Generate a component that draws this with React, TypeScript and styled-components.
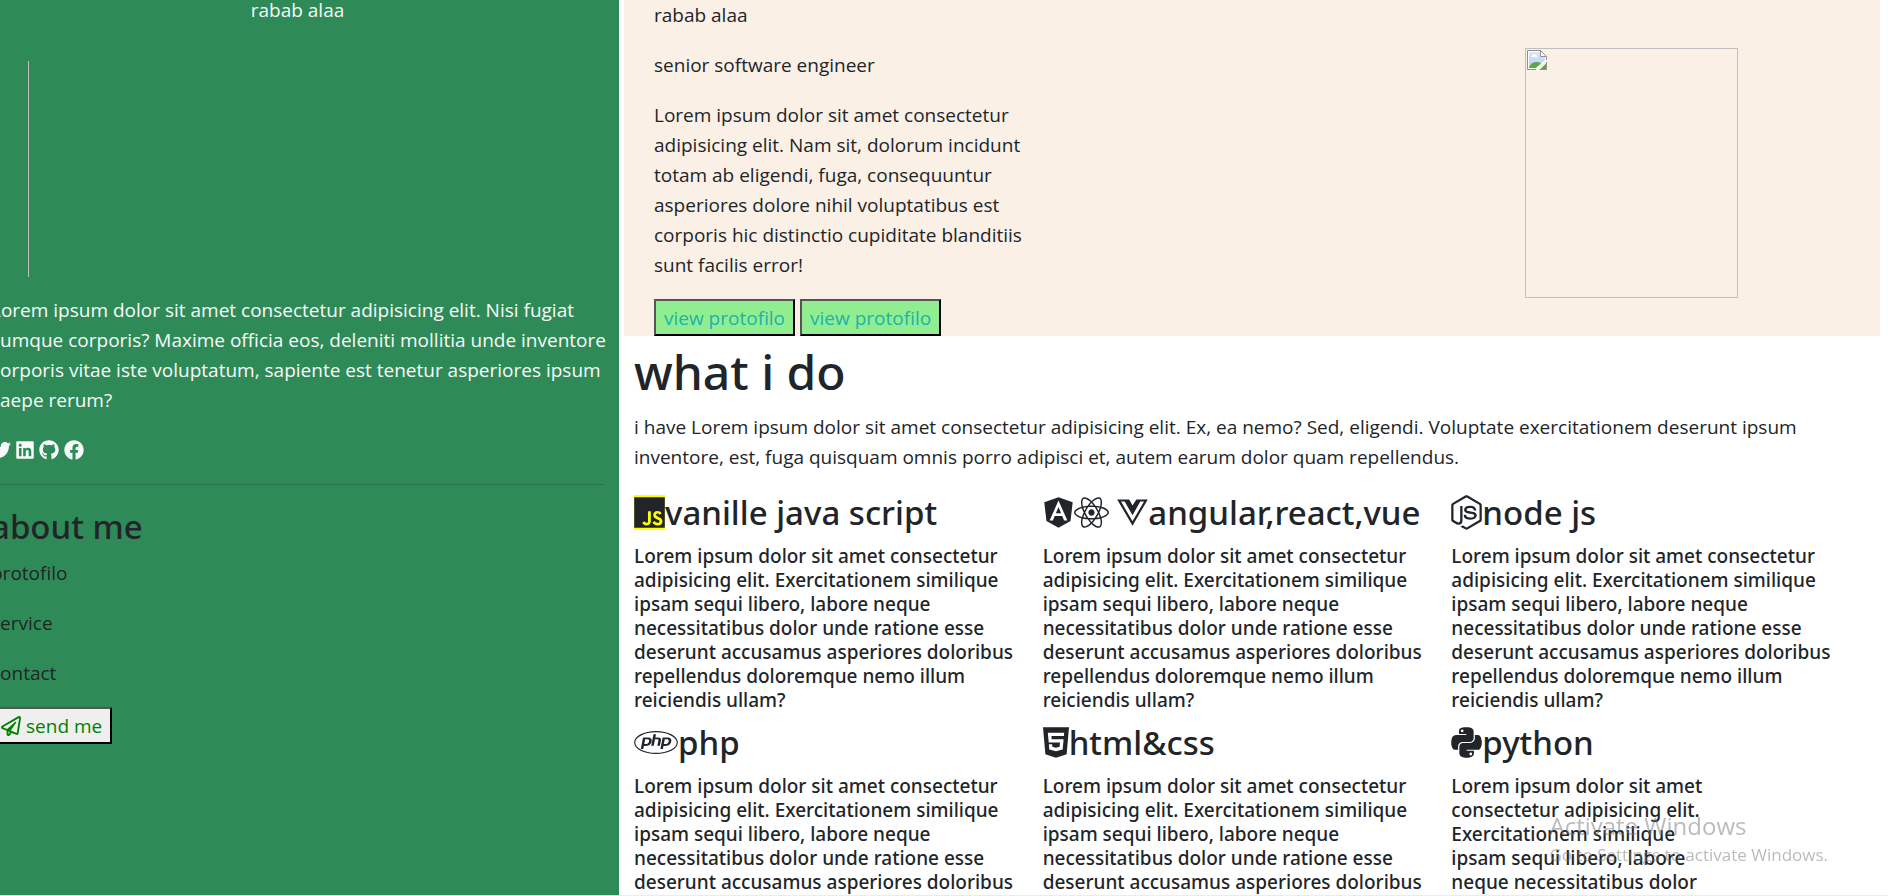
import React from 'react';
import styled, { createGlobalStyle } from 'styled-components';
import {
  FaAngular,
  FaFacebook,
  FaGithub,
  FaHtml5,
  FaJs,
  FaLinkedin,
  FaNodeJs,
  FaPhp,
  FaPython,
  FaReact,
  FaRegPaperPlane,
  FaTwitter,
  FaVuejs,
} from 'react-icons/fa';

const headingFont = '"Segoe UI", "Noto Sans", "Open Sans", sans-serif';

const GlobalStyle = createGlobalStyle`
  *, *::before, *::after { box-sizing: border-box; }
  body {
    margin: 0;
    background: #fff;
    color: #212529;
    font-family: "Segoe UI", "Open Sans", "Noto Sans", sans-serif;
    font-size: 19px;
    line-height: 30px;
  }
`;

const Page = styled.div`
  display: grid;
  grid-template-columns: 619fr 1256fr;
  column-gap: 5px;
  height: 100vh;
  padding-right: 8px;
  overflow: hidden;
  border-bottom: 1px solid #ececec;
`;

const Sidebar = styled.aside`
  background: #2e8b57;
  overflow: hidden;
  min-width: 0;
`;

const SidebarInner = styled.div`
  margin: -6px 15px 0 -9px;
`;

const Paragraph = styled.p`
  margin: 0 0 19px;
  padding-top: 1px;
`;

const LightText = styled(Paragraph)`
  color: #f8f9fa;
`;

const OwnerName = styled(LightText)`
  text-align: center;
`;

const Bio = styled(LightText)`
  margin-right: -8px;
`;

const PortraitEdge = styled.div`
  width: 1px;
  height: 216px;
  margin: 36px 0 17px 37px;
  background: #c0c0c0;
`;

const SocialLinks = styled.nav`
  display: flex;
  align-items: center;
  gap: 5px;
  height: 30px;
  padding-top: 2px;
`;

const SocialLink = styled.a<{ $width: number }>`
  display: flex;
  color: #f8f9fa;

  svg {
    height: 20px;
    width: ${({ $width }) => $width}px;
  }
`;

const Divider = styled.hr`
  height: 1px;
  margin: 20px 0;
  border: 0;
  background: #212529;
  opacity: 0.25;
`;

const Heading = styled.h2`
  margin: 0 0 9px;
  padding-top: 1px;
  font-family: ${headingFont};
  font-size: 33px;
  font-weight: 500;
  line-height: 42px;
  white-space: nowrap;
`;

const Glyph = styled.span<{ $width: number; $marked?: boolean }>`
  display: inline-block;
  height: 35px;
  background: ${({ $marked }) => ($marked ? '#ff0' : 'transparent')};
  vertical-align: -5px;

  svg {
    display: block;
    height: 35px;
    width: ${({ $width }) => $width}px;
  }
`;

const MenuItem = styled.a`
  display: block;
  width: fit-content;
  margin-bottom: 19px;
  padding-top: 1px;
  color: inherit;
  text-decoration: none;
`;

const Button = styled.button<{ $tone: 'plain' | 'lime' }>`
  height: 37px;
  padding: 0 8px;
  border: 2px solid;
  border-color: #555 #000 #000 #555;
  background: ${({ $tone }) => ($tone === 'lime' ? '#90ee90' : '#efefef')};
  color: ${({ $tone }) => ($tone === 'lime' ? '#20b2aa' : '#008000')};
  font: inherit;
  white-space: nowrap;

  svg {
    margin-right: 5px;
    font-size: 20px;
    vertical-align: -3px;
  }
`;

const Main = styled.main`
  overflow: hidden;
  min-width: 0;
`;

const Hero = styled.section`
  display: flex;
  justify-content: space-between;
  align-items: flex-start;
  padding: 0 142px 0 30px;
  background: #faf0e6;
`;

const HeroText = styled.div`
  width: 376px;
  margin-top: -1px;
`;

const ButtonRow = styled.div`
  display: flex;
  gap: 5px;
`;

const MissingPicture = styled.div`
  width: 213px;
  height: 250px;
  margin-top: 48px;
  padding: 1px;
  border: 1px solid #c0c0c0;

  svg {
    display: block;
  }
`;

const Services = styled.section`
  padding: 5px 20px 0 10px;
`;

const Title = styled.h1`
  margin: 0 0 9px;
  padding-top: 1px;
  font-family: ${headingFont};
  font-size: 48px;
  font-weight: 500;
  line-height: 60px;
`;

const CardGrid = styled.div`
  display: grid;
  grid-template-columns: repeat(3, minmax(0, 1fr));
`;

const Card = styled.article<{ $narrow?: boolean }>`
  padding-right: ${({ $narrow }) => ($narrow ? '136px' : '20px')};
`;

const CardText = styled.p`
  margin: 0 0 9px;
  padding-top: 1px;
  font-family: ${headingFont};
  font-weight: 500;
  line-height: 24px;
`;

const Watermark = styled.div`
  position: fixed;
  right: 60px;
  bottom: 27px;
  color: rgba(120, 120, 120, 0.5);
  pointer-events: none;
`;

const WatermarkTitle = styled.div`
  font-size: 24px;
`;

const WatermarkNote = styled.div`
  font-size: 17px;
  line-height: 28px;
`;

const BrokenImageIcon = () => (
  <svg width="20" height="20" viewBox="0 0 20 20" aria-hidden="true">
    <defs>
      <linearGradient id="sky" x1="0" y1="0" x2="0" y2="1">
        <stop offset="0" stopColor="#dbe6fb" />
        <stop offset="1" stopColor="#b4caf3" />
      </linearGradient>
    </defs>
    <path d="M.5.5h13l6 6v4L10.500 19.500H.5z" fill="#fff" />
    <path d="M2 2h11v4.500h5V10l-9 8H2z" fill="url(#sky)" />
    <path d="M4 7c0-1 1-1.500 1.500-1.500C6 3.500 8.500 3.500 9 5.500c1 0 1.500.5 1.500 1.500z" fill="#fff" />
    <path d="M2 18c1-4 4-6 7.500-6 2 0 3.500.5 4.500 1.500L8.500 18z" fill="#5bab3b" />
    <path d="M9 19.500H.5V.5h13l6 6V10M13.500.5v6h6" fill="none" stroke="#919191" />
    <path d="M19.500 13v6.500H13l3-3z" fill="#5bab3b" />
    <path d="M19.500 12v7.500H12.500" fill="none" stroke="#919191" />
  </svg>
);

const cardText =
  'Lorem ipsum dolor sit amet consectetur adipisicing elit. Exercitationem similique ipsam sequi libero, labore neque necessitatibus dolor unde ratione esse deserunt accusamus asperiores doloribus repellendus doloremque nemo illum reiciendis ullam?';

const skills: { name: string; icon: React.ReactNode; narrow?: boolean }[] = [
  { name: 'vanille java script', icon: <Glyph $width={31} $marked><FaJs /></Glyph> },
  {
    name: 'angular,react,vue',
    icon: (
      <>
        <Glyph $width={31}><FaAngular /></Glyph>
        <Glyph $width={35}><FaReact /></Glyph>{' '}
        <Glyph $width={31}><FaVuejs /></Glyph>
      </>
    ),
  },
  { name: 'node js', icon: <Glyph $width={31}><FaNodeJs /></Glyph> },
  { name: 'php', icon: <Glyph $width={44}><FaPhp /></Glyph> },
  { name: 'html&css', icon: <Glyph $width={26}><FaHtml5 /></Glyph> },
  { name: 'python', icon: <Glyph $width={31}><FaPython /></Glyph>, narrow: true },
];

export default function App() {
  return (
    <>
      <GlobalStyle />
      <Page>
        <Sidebar>
          <SidebarInner>
            <OwnerName>rabab alaa</OwnerName>
            <PortraitEdge />
            <Bio>
              Lorem ipsum dolor sit amet consectetur adipisicing elit. Nisi fugiat cumque corporis? Maxime officia
              eos, deleniti mollitia unde inventore corporis vitae iste voluptatum, sapiente est tenetur asperiores
              ipsum saepe rerum?
            </Bio>
            <SocialLinks>
              <SocialLink $width={20} href="#twitter" aria-label="Twitter"><FaTwitter /></SocialLink>
              <SocialLink $width={18} href="#linkedin" aria-label="LinkedIn"><FaLinkedin /></SocialLink>
              <SocialLink $width={20} href="#github" aria-label="GitHub"><FaGithub /></SocialLink>
              <SocialLink $width={20} href="#facebook" aria-label="Facebook"><FaFacebook /></SocialLink>
            </SocialLinks>
            <Divider />
            <Heading>about me</Heading>
            <MenuItem href="#protofilo">protofilo</MenuItem>
            <MenuItem href="#service">service</MenuItem>
            <MenuItem href="#contact">contact</MenuItem>
            <Button type="button" $tone="plain"><FaRegPaperPlane />send me</Button>
          </SidebarInner>
        </Sidebar>
        <Main>
          <Hero>
            <HeroText>
              <Paragraph>rabab alaa</Paragraph>
              <Paragraph>senior software engineer</Paragraph>
              <Paragraph>
                Lorem ipsum dolor sit amet consectetur adipisicing elit. Nam sit, dolorum incidunt totam ab eligendi,
                fuga, consequuntur asperiores dolore nihil voluptatibus est corporis hic distinctio cupiditate
                blanditiis sunt facilis error!
              </Paragraph>
              <ButtonRow>
                <Button type="button" $tone="lime">view protofilo</Button>
                <Button type="button" $tone="lime">view protofilo</Button>
              </ButtonRow>
            </HeroText>
            <MissingPicture><BrokenImageIcon /></MissingPicture>
          </Hero>
          <Services>
            <Title>what i do</Title>
            <Paragraph>
              i have Lorem ipsum dolor sit amet consectetur adipisicing elit. Ex, ea nemo? Sed, eligendi. Voluptate
              exercitationem deserunt ipsum inventore, est, fuga quisquam omnis porro adipisci et, autem earum dolor
              quam repellendus.
            </Paragraph>
            <CardGrid>
              {skills.map(({ name, icon, narrow }) => (
                <Card key={name} $narrow={narrow}>
                  <Heading as="h3">{icon}{name}</Heading>
                  <CardText>{cardText}</CardText>
                </Card>
              ))}
            </CardGrid>
          </Services>
        </Main>
      </Page>
      <Watermark>
        <WatermarkTitle>Activate Windows</WatermarkTitle>
        <WatermarkNote>Go to Settings to activate Windows.</WatermarkNote>
      </Watermark>
    </>
  );
}
